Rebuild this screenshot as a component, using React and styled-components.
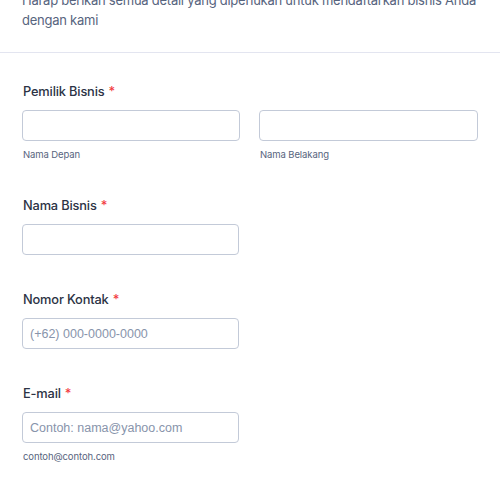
import styled, { createGlobalStyle } from 'styled-components';

const GlobalStyle = createGlobalStyle`
  html, body {
    margin: 0;
    padding: 0;
    background: #fff;
  }
  body {
    font-family: Inter, "Liberation Sans", sans-serif;
    overflow: hidden;
  }
`;

const Page = styled.div`
  width: 500px;
  height: 484px;
  overflow: hidden;
  background: #fff;
`;

// header text is scrolled partly out of view at the top
const Header = styled.header`
  margin-top: -10px;
  padding: 0 20px 22px 22px;
  border-bottom: 1px solid #e3e5f0;
`;

const Intro = styled.p`
  margin: 0;
  font-size: 13px;
  letter-spacing: -0.25px;
  line-height: 20px;
  color: #57647e;
`;

const Form = styled.ul`
  list-style: none;
  margin: 0;
  padding: 29px 22px 0;
  display: flex;
  flex-direction: column;
  gap: 35px;
`;

const Field = styled.li`
  display: flex;
  flex-direction: column;
`;

const Label = styled.label`
  font-size: 12.8px;
  letter-spacing: -0.15px;
  line-height: 20px;
  font-weight: 500;
  color: #2c3345;
  margin: 0 0 8px 1px;
`;

const Star = styled.span`
  color: #f23a3c;
  margin-left: 4px;
`;

const Row = styled.div`
  display: flex;
  gap: 19px;
`;

const Column = styled.div`
  display: flex;
  flex-direction: column;
  width: ${p => p.$width || 218}px;
`;

const Input = styled.input`
  box-sizing: border-box;
  width: ${p => p.$width || 218}px;
  height: 31px;
  border: 1px solid #c3cad8;
  border-radius: 4px;
  padding: 0 7px;
  font-family: "Liberation Sans", Arial, sans-serif;
  font-size: 12.5px;
  color: #2c3345;
  background: #fff;
  &::placeholder {
    color: #8894ab;
  }
`;

const SubLabel = styled.span`
  margin: 7px 0 0 1px;
  font-size: 9.5px;
  letter-spacing: -0.1px;
  line-height: 13px;
  color: #57647e;
`;

export default function App() {
  return (
    <Page>
      <GlobalStyle />
      <Header>
        <Intro>
          Harap berikan semua detail yang diperlukan untuk mendaftarkan bisnis Anda dengan kami
        </Intro>
      </Header>
      <Form>
        <Field>
          <Label>Pemilik Bisnis<Star>*</Star></Label>
          <Row>
            <Column>
              <Input />
              <SubLabel>Nama Depan</SubLabel>
            </Column>
            <Column $width={219}>
              <Input $width={219} />
              <SubLabel>Nama Belakang</SubLabel>
            </Column>
          </Row>
        </Field>
        <Field>
          <Label>Nama Bisnis<Star>*</Star></Label>
          <Input $width={217} />
        </Field>
        <Field>
          <Label>Nomor Kontak<Star>*</Star></Label>
          <Input $width={217} placeholder="(+62) 000-0000-0000" />
        </Field>
        <Field>
          <Label>E-mail<Star>*</Star></Label>
          <Input $width={217} placeholder="Contoh: nama@yahoo.com" />
          <SubLabel>contoh@contoh.com</SubLabel>
        </Field>
      </Form>
    </Page>
  );
}
